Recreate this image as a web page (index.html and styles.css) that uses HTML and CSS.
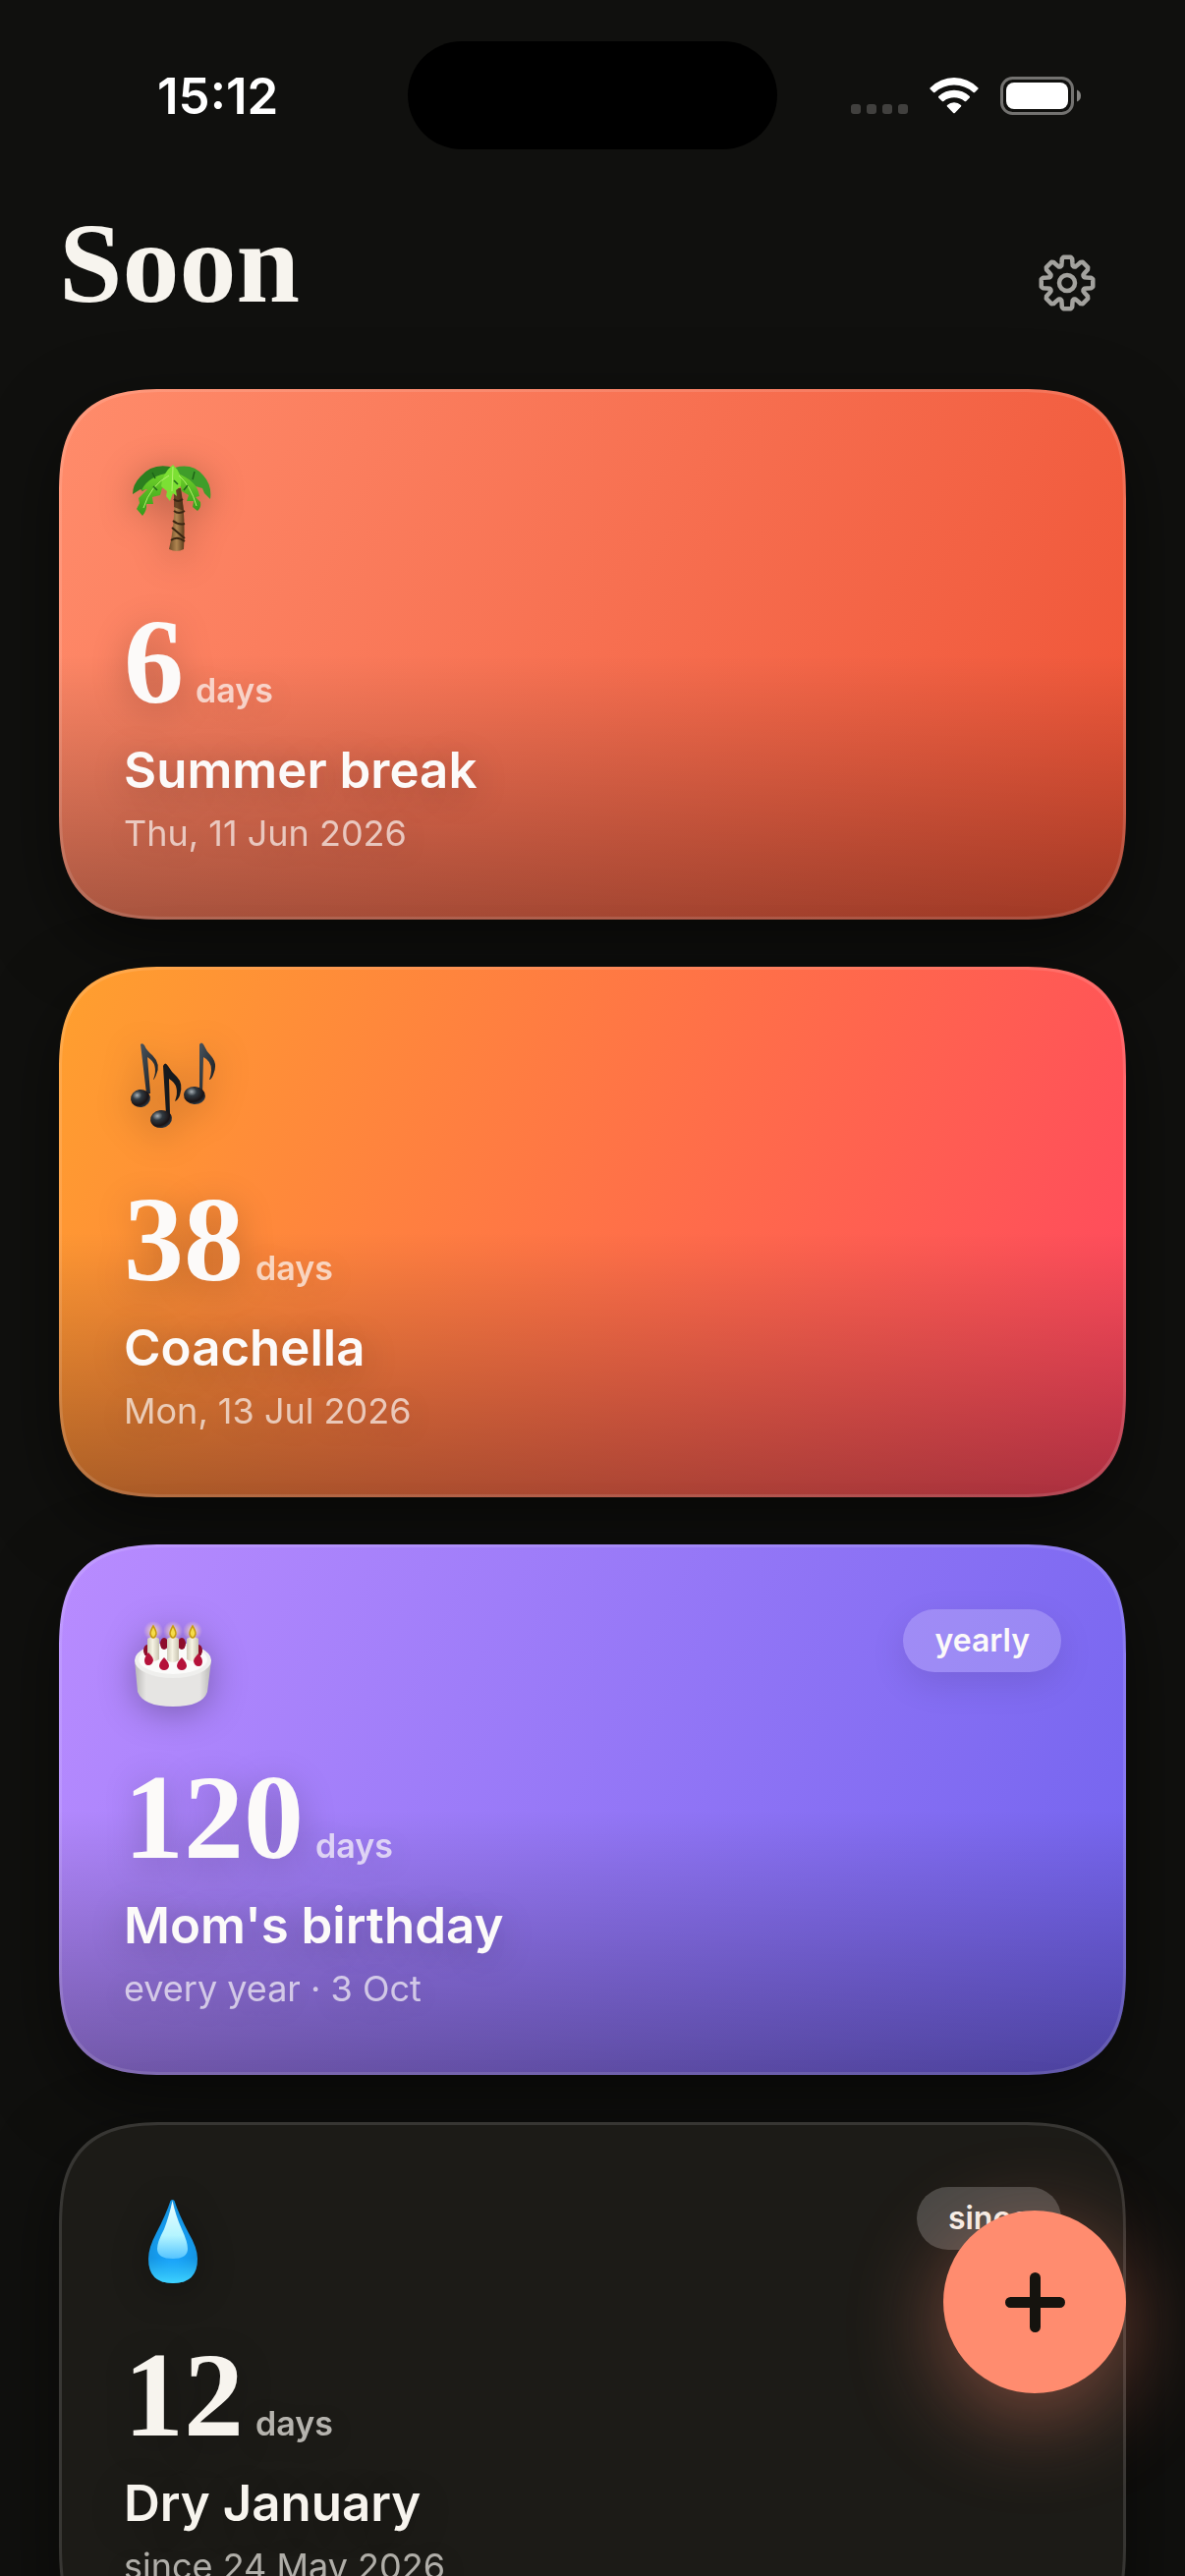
FILE: index.html
```html
<!DOCTYPE html>
<html lang="en">

<head>
    <meta charset="UTF-8">
    <meta name="viewport" content="width=device-width, initial-scale=1.0">
    <title>Soon</title>
    <link rel="stylesheet" href="styles.css">
</head>

<body>

    <div class="status-bar">
        <span class="time">15:12</span>
        <div class="island"></div>
        <div class="indicators">
            <svg class="signal" width="58" height="38" viewBox="0 0 58 38" fill="#41403e">
                <rect x="0" y="28" width="10" height="10" rx="3" />
                <rect x="16" y="28" width="10" height="10" rx="3" />
                <rect x="32" y="28" width="10" height="10" rx="3" />
                <rect x="48" y="28" width="10" height="10" rx="3" />
            </svg>
            <svg width="50" height="38" viewBox="0 0 50 38" fill="#fff">
                <path d="M0.500 11.500Q11 1 25 1Q39 1 49.500 11.500Q50 12 49.500 12.500L46 16Q45.300 16.500 44.500 16Q36 8.500 25 8.500Q14 8.500 5.500 16Q4.700 16.500 4 16L0.500 12.500Q0 12 0.500 11.500Z" />
                <path d="M9.200 20Q16 13.800 25 13.800Q34 13.800 40.800 20Q41.300 20.800 40.800 21.500L37.200 25Q36.400 25.600 35.600 25Q31 21.300 25 21.300Q19 21.300 14.400 25Q13.600 25.600 12.800 25L9.200 21.500Q8.700 20.800 9.200 20Z" />
                <path d="M18 29Q21 26.300 25 26.300Q29 26.300 32 29Q32.700 29.800 32 30.600L25.800 37Q25 37.700 24.200 37L18 30.600Q17.300 29.800 18 29Z" />
            </svg>
            <svg width="82" height="39" viewBox="0 0 82 39">
                <rect x="1.500" y="1.500" width="72" height="36" rx="11" fill="none" stroke="#737270" stroke-width="3" />
                <rect x="6" y="6" width="63" height="27" rx="8" fill="#fff" />
                <path d="M78 13.500Q82 15 82 19.500Q82 24 78 25.500Z" fill="#858482" />
            </svg>
        </div>
    </div>

    <header class="header">
        <h1>Soon</h1>
        <button class="settings" aria-label="Settings">
            <svg width="58" height="58" viewBox="-29 -29 58 58" fill="none" stroke="#a3a29e" stroke-width="4.500" stroke-linejoin="round">
                <path id="gear" d="" />
                <circle r="8" />
            </svg>
        </button>
    </header>

    <main class="list">
        <article class="card coral">
            <div class="card-top">
                <svg class="emoji" viewBox="0 0 96 96">
                    <defs>
                        <linearGradient id="trunk" x1="0" x2="1">
                            <stop offset="0" stop-color="#6b4a26" />
                            <stop offset=".5" stop-color="#b08550" />
                            <stop offset="1" stop-color="#5a3a1c" />
                        </linearGradient>
                        <linearGradient id="leaf" x1="0" y1="0" x2="0" y2="1">
                            <stop offset="0" stop-color="#6fd32a" />
                            <stop offset="1" stop-color="#36991b" />
                        </linearGradient>
                    </defs>
                    <path d="M51 27L58 27Q63 55 61 89Q54 93 46 89Q53 60 51 27Z" fill="url(#trunk)" />
                    <path d="M51 27L58 27L61 50L51 46Z" fill="#3f240f" opacity=".65" />
                    <path d="M51 38Q55 42 60 38M51 50Q56 54 62 50M50 60Q56 65 62 63M49 67L62 78M48 80Q54 75 62 81" fill="none" stroke="#3a2512" stroke-width="2" />
                    <path d="M51 6Q30 0 17 15Q9 23 9 33L17 28L19 30L27 23L33 24L38 16L50 15Z" fill="#2c7f1f" />
                    <path d="M52 6Q70 1 81 14Q90 24 88 38L82 32L80 27L73 25L66 18L54 15Z" fill="#3f9d2a" />
                    <path d="M48 11Q25 14 18 29L24 28L15 37L16 42L13 48L19 55Q24 49 23 43L30 43L29 36L37 34L39 27L47 23Z" fill="url(#leaf)" />
                    <path d="M55 12Q75 20 77 35L73 36L78 41Q79 47 75 50L70 46L71 40L64 40L66 34L59 30Z" fill="url(#leaf)" />
                    <path d="M50 3Q60 12 58 25L53 29L54 35L50 32L47 40L43 35L44 30L38 25Q39 12 50 3Z" fill="#7ce034" />
                    <path d="M50 5L49 30M46 14Q27 24 20 47M56 14Q68 24 74 45" fill="none" stroke="#b4f26c" stroke-width="1" />
                    <path d="M29 11L32 17M72 10L70 18M30 25L34 29M65 24L61 29M51 19L55 23" stroke="#1f6418" stroke-width="1.500" />
                </svg>
            </div>
            <p class="count"><span class="number">6</span> <span class="unit">days</span></p>
            <h2>Summer break</h2>
            <p class="date">Thu, 11 Jun 2026</p>
        </article>

        <article class="card sunset">
            <div class="card-top">
                <svg class="emoji" viewBox="0 0 96 96">
                    <defs>
                        <linearGradient id="stem" x1="0" y1="0" x2="1" y2="1">
                            <stop offset="0" stop-color="#4a545d" />
                            <stop offset="1" stop-color="#14181c" />
                        </linearGradient>
                        <radialGradient id="head" cx=".35" cy=".3" r=".8">
                            <stop offset="0" stop-color="#a8b0b5" />
                            <stop offset=".3" stop-color="#30383f" />
                            <stop offset=".7" stop-color="#191315" />
                            <stop offset="1" stop-color="#34495a" />
                        </radialGradient>
                    </defs>
                    <path d="M17 5Q19 3 21 6Q23 11 29 16Q38 25 33 36Q31 41 30 41Q36 25 24 18L27 55L23 55Z" fill="url(#stem)" />
                    <ellipse cx="17" cy="60" rx="10" ry="9" transform="rotate(-8 17 60)" fill="url(#head)" />
                    <path d="M40 27Q42 22 45 27Q49 34 54 38Q61 45 57 57Q55 62 52 63Q58 47 46 40L47 76L43 76Z" fill="#15191d" />
                    <ellipse cx="38" cy="81" rx="11" ry="9" transform="rotate(-8 38 81)" fill="url(#head)" />
                    <path d="M77 5Q79 2 81 5Q84 12 89 17Q96 25 91 36Q89 41 87 41Q93 24 81 18L80 55L77 54Z" fill="url(#stem)" />
                    <ellipse cx="72" cy="57" rx="11" ry="9" transform="rotate(4 72 57)" fill="url(#head)" />
                </svg>
            </div>
            <p class="count"><span class="number">38</span> <span class="unit">days</span></p>
            <h2>Coachella</h2>
            <p class="date">Mon, 13 Jul 2026</p>
        </article>

        <article class="card violet">
            <div class="card-top">
                <svg class="emoji" viewBox="0 0 96 96">
                    <defs>
                        <linearGradient id="cake" x1="0" x2="1">
                            <stop offset="0" stop-color="#b9b8b6" />
                            <stop offset=".15" stop-color="#e6e5e3" />
                            <stop offset=".85" stop-color="#e6e5e3" />
                            <stop offset="1" stop-color="#b9b8b6" />
                        </linearGradient>
                        <linearGradient id="candle" x1="0" x2="1">
                            <stop offset="0" stop-color="#cfcbb9" />
                            <stop offset=".45" stop-color="#f6f3e4" />
                            <stop offset="1" stop-color="#c9c4b0" />
                        </linearGradient>
                        <radialGradient id="glow">
                            <stop offset="0" stop-color="#fff0a0" stop-opacity=".9" />
                            <stop offset="1" stop-color="#ffd9d0" stop-opacity="0" />
                        </radialGradient>
                    </defs>
                    <path d="M11 44L14 76Q20 91 50 91Q80 91 85 76L89 44Z" fill="url(#cake)" />
                    <ellipse cx="50" cy="44" rx="39" ry="18" fill="#efefed" />
                    <ellipse cx="50" cy="43" rx="35" ry="15" fill="#fbfbfa" />
                    <g fill="#8d0d2b">
                        <ellipse cx="24" cy="34" rx="4" ry="6" />
                        <ellipse cx="41" cy="27" rx="4" ry="6" />
                        <ellipse cx="59" cy="27" rx="4" ry="6" />
                        <ellipse cx="76" cy="34" rx="4" ry="6" />
                    </g>
                    <g fill="url(#candle)">
                        <path d="M24 22Q30 18 36 22V43Q30 47 24 43Z" />
                        <path d="M44 22Q50 18 56 22V44Q50 48 44 44Z" />
                        <path d="M64 22Q70 18 76 22V43Q70 47 64 43Z" />
                    </g>
                    <g fill="url(#glow)">
                        <circle cx="30" cy="14" r="10" />
                        <circle cx="50" cy="14" r="10" />
                        <circle cx="70" cy="14" r="10" />
                    </g>
                    <g fill="#f5dc4a" stroke="#c79a12" stroke-width="1.500">
                        <path d="M30 9Q33 14 33 17Q32 21 30 21Q28 21 27 17Q27 14 30 9Z" />
                        <path d="M50 9Q53 14 53 17Q52 21 50 21Q48 21 47 17Q47 14 50 9Z" />
                        <path d="M70 9Q73 14 73 17Q72 21 70 21Q68 21 67 17Q67 14 70 9Z" />
                    </g>
                    <g fill="#b5123a">
                        <path d="M25 36Q30 41 30 44Q29 49 25 49Q21 49 21 44Q21 41 25 36Z" />
                        <path d="M41 41Q46 46 46 50Q45 54 41 54Q37 54 36 50Q36 46 41 41Z" />
                        <path d="M59 41Q64 46 64 50Q63 54 59 54Q55 54 54 50Q54 46 59 41Z" />
                        <path d="M76 37Q80 42 80 45Q80 50 76 50Q72 50 71 45Q71 42 76 37Z" />
                    </g>
                </svg>
                <span class="tag">yearly</span>
            </div>
            <p class="count"><span class="number">120</span> <span class="unit">days</span></p>
            <h2>Mom's birthday</h2>
            <p class="date">every year · 3 Oct</p>
        </article>

        <article class="card plain">
            <div class="card-top">
                <svg class="emoji" viewBox="0 0 96 96">
                    <defs>
                        <radialGradient id="drop" cx=".5" cy=".62" r=".5">
                            <stop offset="0" stop-color="#1aa5ff" />
                            <stop offset=".6" stop-color="#159bee" />
                            <stop offset="1" stop-color="#1593e0" />
                        </radialGradient>
                        <linearGradient id="rim" x1="0" y1="0" x2="0" y2="1">
                            <stop offset=".7" stop-color="#35c8ff" stop-opacity="0" />
                            <stop offset="1" stop-color="#3fd4ff" />
                        </linearGradient>
                        <linearGradient id="shine" x1="0" y1="0" x2="0" y2="1">
                            <stop offset="0" stop-color="#eefdff" />
                            <stop offset=".6" stop-color="#b4f5ff" />
                            <stop offset="1" stop-color="#55c4ff" />
                        </linearGradient>
                    </defs>
                    <path d="M47.500 6Q49.500 4 51.500 6Q56 20 66 39Q75 54 75 65Q75 90 50 90Q25 90 25 65Q25 54 33 39Q43 20 47.500 6Z" fill="url(#drop)" />
                    <path d="M47.500 6Q49.500 4 51.500 6Q56 20 66 39Q75 54 75 65Q75 90 50 90Q25 90 25 65Q25 54 33 39Q43 20 47.500 6Z" fill="url(#rim)" />
                    <path d="M49.500 6Q53 22 59 35Q65 48 65 55Q65 65 50 65Q34 65 34 55Q34 48 41 35Q46 22 49.500 6Z" fill="url(#shine)" />
                </svg>
                <span class="tag">since</span>
            </div>
            <p class="count"><span class="number">12</span> <span class="unit">days</span></p>
            <h2>Dry January</h2>
            <p class="date">since 24 May 2026</p>
        </article>
    </main>

    <button class="add" aria-label="Add event">
        <svg width="61" height="61" viewBox="0 0 61 61" stroke="#15130e" stroke-width="11" stroke-linecap="round">
            <path d="M30.500 5.500V55.500M5.500 30.500H55.500" />
        </svg>
    </button>

    <script>
        // outline of the eight-toothed gear
        const points = [];
        for (let i = 0; i < 8; i++) {
            const mid = i * 45 - 90;
            [[-22, 18], [-18, 18.5], [-15, 21], [-12, 25], [-8, 26.5], [8, 26.5], [12, 25], [15, 21], [18, 18.5], [22, 18]].forEach(function (p) {
                const a = (mid + p[0]) * Math.PI / 180;
                points.push((p[1] * Math.cos(a)).toFixed(2) + ' ' + (p[1] * Math.sin(a)).toFixed(2));
            });
        }
        document.getElementById('gear').setAttribute('d', 'M' + points.join('L') + 'Z');
    </script>

</body>

</html>
```
FILE: styles.css
```css
* {
    box-sizing: border-box;
}

body {
    margin: 0;
    height: 100vh;
    overflow: hidden;
    background-color: #10100e;
    color: #f7f4ee;
    font-family: Inter, "Liberation Sans", sans-serif;
}

h1, h2, p {
    margin: 0;
}

button {
    border: none;
    padding: 0;
    background: none;
    cursor: pointer;
}

svg {
    display: block;
}

.status-bar {
    display: grid;
    grid-template-columns: 1fr auto 1fr;
    align-items: center;
    padding: 42px 106px 0;
    color: #fff;
}

.time {
    padding-left: 54px;
    font-size: 51px;
    font-weight: 600;
}

.island {
    width: 376px;
    height: 110px;
    border-radius: 55px;
    background-color: #000;
}

.indicators {
    display: flex;
    justify-content: flex-end;
    align-items: center;
    gap: 22px;
}

.header {
    display: flex;
    justify-content: space-between;
    align-items: flex-end;
    padding: 56px 80px 68px 60px;
}

.header h1 {
    font-family: "Liberation Serif", serif;
    font-size: 116px;
    font-weight: 700;
    line-height: 120px;
}

.settings {
    display: grid;
    place-items: center;
    width: 80px;
    height: 80px;
}

.list {
    display: flex;
    flex-direction: column;
    gap: 48px;
    padding: 0 60px;
}

.card {
    position: relative;
    padding: 66px 66px 64px;
    border-radius: 92px;
    color: #fcfaf9;
    box-shadow: 0 24px 72px rgba(0, 0, 0, 0.5);
}

/* light hairline inside the edge */
.card::after {
    content: "";
    position: absolute;
    inset: 0;
    border: 3px solid rgba(255, 255, 255, 0.12);
    border-radius: inherit;
}

@supports (corner-shape: superellipse(1.5)) {
    .card, .card::after {
        border-radius: 112px;
        corner-shape: superellipse(1.5);
    }
}

.coral {
    background: linear-gradient(transparent 50%, rgba(0, 0, 0, 0.33)), linear-gradient(116deg, #ff8c6b, #ef5336);
}

.sunset {
    background: linear-gradient(transparent 50%, rgba(0, 0, 0, 0.33)), linear-gradient(116deg, #ffa02e, #ff4460);
}

.violet {
    background: linear-gradient(transparent 50%, rgba(0, 0, 0, 0.33)), linear-gradient(116deg, #b98cff, #7062ee);
}

.plain {
    background: #1c1b17;
    color: #f7f4ee;
}

.card-top {
    display: flex;
    justify-content: space-between;
    align-items: flex-start;
}

.emoji {
    width: 96px;
    height: 96px;
    margin-top: 8px;
    filter: drop-shadow(0 6px 18px rgba(0, 0, 0, 0.3));
}

.tag {
    padding: 0 32px;
    border-radius: 32px;
    background-color: rgba(255, 255, 255, 0.2);
    font-size: 32px;
    font-weight: 600;
    line-height: 64px;
    box-shadow: 0 12px 36px rgba(0, 0, 0, 0.1);
}

.plain .tag {
    box-shadow: none;
}

.count {
    display: flex;
    align-items: baseline;
    gap: 12px;
    margin-top: 48px;
}

.number {
    font-family: "Liberation Serif", serif;
    font-size: 122px;
    font-weight: 700;
    line-height: 120px;
}

.unit {
    font-size: 34px;
    font-weight: 600;
    line-height: 40px;
    opacity: 0.7;
}

.card h2 {
    margin-top: 20px;
    font-size: 51px;
    font-weight: 600;
    line-height: 60px;
}

.date {
    margin-top: 10px;
    font-size: 36px;
    line-height: 48px;
    opacity: 0.68;
}

.number, .card h2, .unit, .date {
    text-shadow: 0 6px 36px rgba(0, 0, 0, 0.25);
}

.add {
    position: fixed;
    right: 60px;
    bottom: 186px;
    display: grid;
    place-items: center;
    width: 186px;
    height: 186px;
    border-radius: 50%;
    background-color: #ff8c6f;
    box-shadow: 0 24px 96px rgba(255, 140, 111, 0.45);
}
```
